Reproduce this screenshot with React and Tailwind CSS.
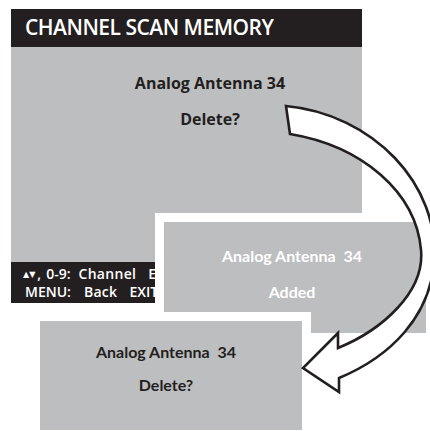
import React from 'react'

const sans = { fontFamily: '"Open Sans", "DejaVu Sans", sans-serif' }
const narrow = { fontFamily: 'Lato, "Open Sans", sans-serif' }

function ScanArrow() {
  // curved hand-off arrow drawn over the three screens
  const d =
    'M 286 106 C 372 114, 441 184, 434 264 C 429 316, 392 356, 339 378 ' +
    'L 339 392 L 303 368 L 338 333 L 338 348 ' +
    'C 382 330, 425 292, 421 250 C 416 192, 362 146, 290 134 Z'
  return (
    <svg className="absolute inset-0 pointer-events-none" width="430" height="431" viewBox="0 0 430 431">
      <path d={d} fill="#ffffff" stroke="#231f20" strokeWidth="2.6" strokeLinejoin="miter" />
    </svg>
  )
}

export default function App() {
  return (
    <div className="relative w-[430px] h-[431px] bg-white overflow-hidden">
      {/* main memory screen */}
      <div className="absolute left-[11px] top-[9px] w-[351px] h-[294px] flex flex-col" style={sans}>
        <div className="h-[38px] bg-[#231f20] flex items-center pl-[14px] text-white text-[21px] font-semibold tracking-[-0.5px]">
          CHANNEL SCAN MEMORY
        </div>
        <div className="flex-1 bg-[#bdbec0] flex flex-col items-center pl-[47px] pt-[28px] text-[#231f20] text-[16px] font-bold leading-[16px]">
          <div>Analog Antenna 34</div>
          <div className="mt-[20px]">Delete?</div>
        </div>
        <div className="h-[41px] bg-[#231f20] text-white text-[14px] font-semibold leading-[18px] pl-[12px] pt-[3px] whitespace-nowrap">
          <div className="flex">
            <span className="text-[8px] self-center">▲▼</span>
            <span className="ml-[2px]">,</span>
            <span className="ml-[5px]">0-9:</span>
            <span className="ml-[8px] tracking-[0.3px]">Channel</span>
            <span className="ml-[12px]">ENTER: Delete</span>
          </div>
          <div className="flex pl-[2px]">
            <span>MENU:</span>
            <span className="ml-[13px] tracking-[0.3px]">Back</span>
            <span className="ml-[12px]">EXIT: Exit</span>
          </div>
        </div>
      </div>

      {/* added confirmation */}
      <div className="absolute left-[155px] top-[213px] bg-white pt-[9px] pl-[9px] pr-[4px] pb-[9px]" style={narrow}>
        <div className="w-[262px] h-[111px] bg-[#bdbec0] flex flex-col items-center pr-[6px] pt-[26px] text-white text-[16px] font-bold leading-[15px]">
          <div className="whitespace-pre">Analog Antenna  34</div>
          <div className="mt-[21px]">Added</div>
        </div>
      </div>

      {/* back to delete prompt */}
      <div className="absolute left-[31px] top-[312px] bg-white p-[9px] pb-[1px]" style={narrow}>
        <div className="w-[262px] h-[109px] bg-[#bdbec0] flex flex-col items-center pr-[10px] pt-[23px] text-[#231f20] text-[16px] font-bold leading-[15px]">
          <div className="whitespace-pre">Analog Antenna  34</div>
          <div className="mt-[18px]">Delete?</div>
        </div>
      </div>

      <ScanArrow />
    </div>
  )
}
